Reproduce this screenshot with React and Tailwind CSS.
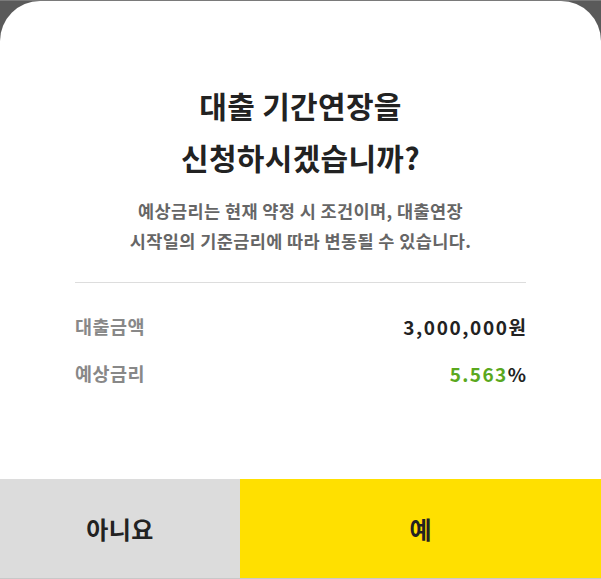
export default function App() {
  const font = { fontFamily: '"Noto Sans CJK KR", "Noto Sans", sans-serif' };
  return (
    <div className="w-[601px] h-[579px] bg-[#5a5a5a] border-t border-[#7a7a7a] overflow-hidden" style={font}>
      <div className="h-[578px] bg-white rounded-t-[40px] flex flex-col">
        <div className="flex-1 px-[75px] pt-[78px]">
          <h1 className="text-center text-[30px] leading-[52px] font-bold text-[#222222] tracking-[0.3px]">
            대출 기간연장을
            <br />
            신청하시겠습니까?
          </h1>
          <p className="mt-[13px] text-center text-[17.5px] leading-[30px] font-semibold text-[#666666] tracking-[0.4px]">
            예상금리는 현재 약정 시 조건이며, 대출연장
            <br />
            시작일의 기준금리에 따라 변동될 수 있습니다.
          </p>
          <div className="mt-[26px] h-px bg-[#dddddd]" />
          <div className="mt-[31px] flex flex-col gap-[21px]">
            <div className="flex items-center justify-between h-[26px]">
              <span className="text-[18.5px] font-semibold text-[#888888] tracking-[0.5px]">대출금액</span>
              <span className="text-[19px] font-bold text-[#222222] tracking-[1.6px] mr-[-1.6px]">3,000,000원</span>
            </div>
            <div className="flex items-center justify-between h-[26px]">
              <span className="text-[18.5px] font-semibold text-[#888888] tracking-[0.5px]">예상금리</span>
              <span className="text-[19px] font-bold text-[#222222] tracking-[1.4px] mr-[-1.4px]">
                <span className="text-[#5aa81e]">5.563</span>%
              </span>
            </div>
          </div>
        </div>
        <div className="flex h-[100px] border-b border-[#c8c8c8]">
          <button className="w-[240px] bg-[#dcdcdc] text-[24px] font-bold text-[#222222] tracking-[0.5px]">아니요</button>
          <button className="flex-1 bg-[#ffe000] text-[24px] font-bold text-[#222222]">예</button>
        </div>
      </div>
    </div>
  );
}
